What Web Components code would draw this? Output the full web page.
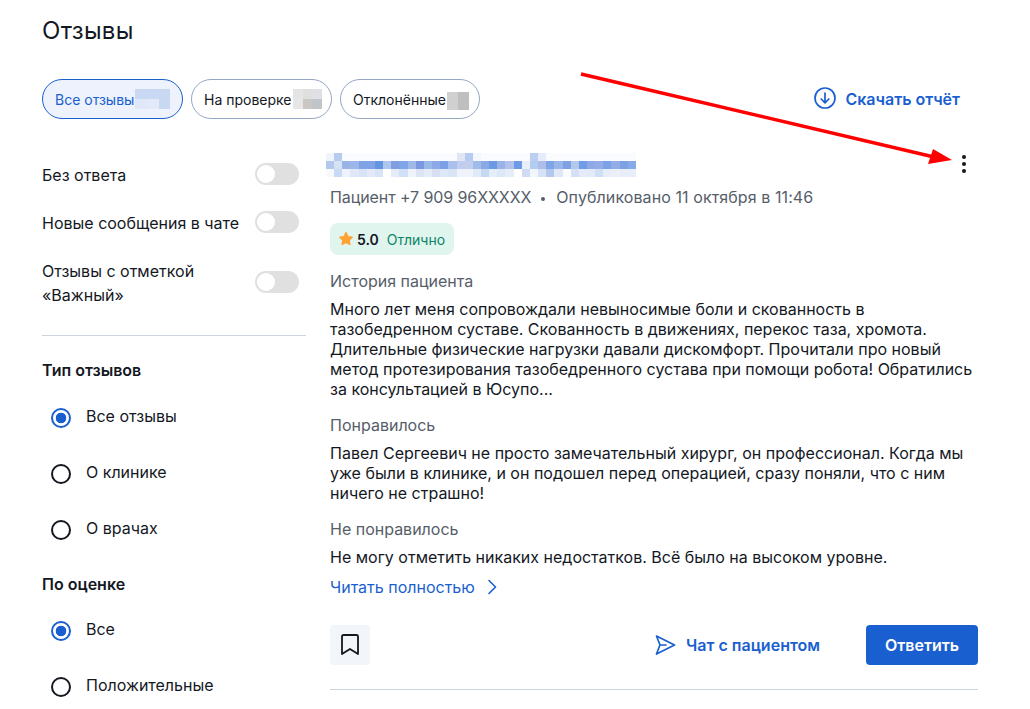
<!DOCTYPE html>
<html lang="ru">
<head>
<meta charset="utf-8">
<title>Отзывы</title>
<style>
  html, body { margin: 0; height: 709px; overflow: hidden; background: #fff; }
  body { font-family: Inter, "Noto Sans", sans-serif; font-size: 16px; color: #14181f; }
</style>
</head>
<body>
<review-page></review-page>
<script>
;(function() {
  // пикселизованные куски: каждая строка - список цветов
  class PixelBlur extends HTMLElement {
    set cells(rows) {
      const root = this.shadowRoot || this.attachShadow({ mode: 'open' })
      const w = this.getAttribute('cell-w') || 8
      const h = this.getAttribute('cell-h') || 8
      root.innerHTML = `
        <style>
          :host { display: block; line-height: 0; }
          .row { display: flex; }
          i { display: block; flex: none; width: ${w}px; height: ${h}px; }
        </style>
        ${rows.map(r => `<div class="row">${r.map(c => `<i style="background:#${c}"></i>`).join('')}</div>`).join('')}
      `
    }
  }
  customElements.define('pixel-blur', PixelBlur)

  class FilterChip extends HTMLElement {
    constructor() {
      super()
      this.attachShadow({ mode: 'open' }).innerHTML = `
        <style>
          :host {
            display: flex;
            align-items: center;
            box-sizing: border-box;
            height: 40px;
            padding-left: 12px;
            border: 1px solid #94a7c4;
            border-radius: 20px;
            font-size: 14px;
            color: #14181f;
          }
          :host([active]) {
            border-color: #1a5fd0;
            background: #edf2fc;
            color: #1a5fd0;
          }
        </style>
        <slot></slot><slot name="count"></slot>
      `
    }
  }
  customElements.define('filter-chip', FilterChip)

  class ToggleRow extends HTMLElement {
    constructor() {
      super()
      this.attachShadow({ mode: 'open' }).innerHTML = `
        <style>
          :host {
            display: flex;
            align-items: center;
            justify-content: space-between;
            width: 257px;
            font-size: 16px;
            line-height: 24px;
          }
          .label { width: 200px; white-space: nowrap; }
          .track {
            flex: none;
            box-sizing: border-box;
            width: 44px;
            height: 22px;
            padding: 2px;
            margin-bottom: 2px;
            border-radius: 11px;
            background: #e0e0e0;
          }
          .knob { width: 18px; height: 18px; border-radius: 50%; background: #fff; }
        </style>
        <div class="label"><slot></slot></div>
        <div class="track"><div class="knob"></div></div>
      `
    }
  }
  customElements.define('toggle-row', ToggleRow)

  class RadioRow extends HTMLElement {
    constructor() {
      super()
      this.attachShadow({ mode: 'open' }).innerHTML = `
        <style>
          :host {
            display: flex;
            align-items: center;
            height: 56px;
            padding-left: 9px;
            font-size: 16px;
          }
          .dot {
            flex: none;
            box-sizing: border-box;
            width: 20px;
            height: 20px;
            margin-right: 15px;
            border: 2px solid #14181f;
            border-radius: 50%;
          }
          :host([checked]) .dot {
            border-color: #1a5fd0;
            background: radial-gradient(circle, #1a5fd0 0 5px, #fff 5.6px);
          }
          span { line-height: 24px; margin-bottom: 4px; }
        </style>
        <div class="dot"></div>
        <span><slot></slot></span>
      `
    }
  }
  customElements.define('radio-row', RadioRow)

  class ReviewBlock extends HTMLElement {
    constructor() {
      super()
      this.attachShadow({ mode: 'open' }).innerHTML = `
        <style>
          :host { display: block; margin-bottom: 16px; font-size: 16px; line-height: 20px; }
          .title { color: #565e69; margin-bottom: 8px; }
          .text { color: #14181f; white-space: pre-line; }
        </style>
        <div class="title"><slot name="title"></slot></div>
        <div class="text"><slot></slot></div>
      `
    }
  }
  customElements.define('review-block', ReviewBlock)

  class ReviewCard extends HTMLElement {
    constructor() {
      super()
      this.attachShadow({ mode: 'open' }).innerHTML = `
        <style>
          :host { display: block; position: relative; width: 648px; }
          .name { margin: 1px 0 0 -4px; }
          .dots { position: absolute; left: 622px; top: 2px; width: 24px; height: 24px; }
          .meta {
            display: flex;
            align-items: center;
            margin-top: 10px;
            height: 20px;
            font-size: 16px;
            color: #565e69;
          }
          .phone { letter-spacing: -.09px; }
          .date { letter-spacing: .09px; }
          .sep { width: 4px; height: 4px; margin: 3px 11px 0 10px; border-radius: 50%; background: #565e69; }
          .badge {
            display: inline-flex;
            align-items: center;
            box-sizing: border-box;
            height: 32px;
            margin: 16px 0 16px;
            padding: 0 9px 0 8px;
            border-radius: 8px;
            background: #e0f5ee;
            font-size: 14px;
          }
          .badge svg { margin-right: 3px; }
          .badge b { font-weight: 600; margin-right: 8px; color: #14181f; }
          .badge span { color: #0b8468; }
          .more {
            display: flex;
            align-items: center;
            height: 20px;
            margin-top: -6px;
            font-size: 16px;
            color: #1a5fd0;
          }
          .more svg { margin-left: 8px; }
          .actions {
            display: flex;
            align-items: center;
            height: 40px;
            margin-top: 28px;
          }
          .mark {
            display: flex;
            align-items: center;
            justify-content: center;
            width: 40px;
            height: 40px;
            border-radius: 4px;
            background: #f2f5fa;
          }
          .chat {
            display: flex;
            align-items: center;
            margin-left: auto;
            margin-right: 46px;
            font-size: 16px;
            font-weight: 600;
            color: #1a5fd0;
          }
          .chat svg { margin-right: 9px; }
          .reply {
            display: flex;
            align-items: center;
            justify-content: center;
            width: 112px;
            height: 40px;
            border-radius: 4px;
            background: #1a5fd0;
            color: #fff;
            font-size: 16px;
            font-weight: 600;
          }
          hr { border: 0; height: 1px; margin: 24px 0 0; background: #cdd4db; }
        </style>
        <pixel-blur class="name" cell-w="8.16"></pixel-blur>
        <svg class="dots" viewBox="0 0 24 24" fill="#14181f">
          <circle cx="12" cy="3" r="2"/><circle cx="12" cy="10" r="2"/><circle cx="12" cy="17" r="2"/>
        </svg>
        <div class="meta"><span class="phone">Пациент +7 909 96XXXXX</span><span class="sep"></span><span class="date">Опубликовано 11 октября в 11:46</span></div>
        <div class="badge">
          <svg width="16" height="16" viewBox="0 0 16 16"><path fill="#ffa233" stroke="#ffa233" stroke-width="1.4" stroke-linejoin="round" d="M8 1.6l1.9 4 4.3.6-3.1 3 .8 4.3L8 11.4l-3.9 2.1.8-4.3-3.1-3 4.3-.6z"/></svg>
          <b>5.0</b><span>Отлично</span>
        </div>
        <slot></slot>
        <div class="more">Читать полностью
          <svg width="18" height="18" viewBox="0 0 18 18" fill="none" stroke="#1a5fd0" stroke-width="1.6" stroke-linecap="round" stroke-linejoin="round"><path d="M6 2.5L12.5 9 6 15.5"/></svg>
        </div>
        <div class="actions">
          <div class="mark">
            <svg width="24" height="24" viewBox="0 0 24 24" fill="none" stroke="#14181f" stroke-width="1.8" stroke-linejoin="round"><path d="M4 3.5A1.5 1.5 0 0 1 5.5 2h13A1.5 1.5 0 0 1 20 3.5V21l-8-5-8 5z"/></svg>
          </div>
          <div class="chat">
            <svg width="23" height="23" viewBox="0 0 23 23" fill="none" stroke="#1a5fd0" stroke-width="1.7" stroke-linejoin="round" stroke-linecap="round"><path d="M2.5 2L20.5 11 2.5 20 6 11zM6 11h6"/></svg>
            Чат с пациентом
          </div>
          <div class="reply">Ответить</div>
        </div>
        <hr>
      `
      this.shadowRoot.querySelector('.name').cells = [
        'f0f4fc b6cdf0 fafbff fafbff fafbff fafbff fafbff fafbff fafbff fafbff fafbff fafbff fafbff fafbff fafbff fafbff e0e6f6 b6cbf0 f4f7fd fafbfe fafbfe fafbfe fafbfe fafbfe fafbfe bdcdf0 e6edfa fafbfe fafbfe fafbfe fafbfe fafbfe fafbfe fafbfe fafbfe fafbfe fafbfe fafbfe'.split(' '),
        'b3c8ec d5e2f6 9ab3e6 9fb7e8 7fa3e4 7fa3e4 6495e0 aec5ec 7f9fe0 7fa6e6 a0b8e8 7a98e0 98b8ea 8ea8e6 7aa0e6 aac0ec c0cdf0 c5cdec 9fbceb 8ba9e3 6c9ae2 9ab2e8 b2c2ec 6c9ae4 e8eff9 b3cdf0 adbce9 7fa5e6 9ab6e8 7fa0e4 b3c9ec 6f9de6 8ea9e6 94abe6 7aa2e8 93ace6 7f9fe4 86aae8'.split(' '),
        'f8f9fd c8daf5 eff1fb dfe7f8 d8e3f6 e3e9f8 d8e4f7 ffffff e6ebf9 d0e0f6 eef3fb dbe3f5 e4ecf9 d6dff4 dde8f8 d9e5f7 f0f3fb f1f3fb e0e9f8 c5d8f3 e5edf9 dde7f7 e5edf9 ffffff d0dcf4 f2f6fc d6e3f6 b3c8ec e0e8f8 fafcfe d5dff5 e6ebf9 e4ebf8 cfdff5 e8eef9 eaeffa e8eef9 e8eef9'.split(' ')
      ]
    }
  }
  customElements.define('review-card', ReviewCard)

  class ReviewPage extends HTMLElement {
    constructor() {
      super()
      this.attachShadow({ mode: 'open' }).innerHTML = `
        <style>
          :host { display: block; position: relative; width: 1030px; height: 709px; overflow: hidden; padding: 0 0 0 42px; box-sizing: border-box; }
          h1 { margin: 0; padding-top: 17px; height: 79px; box-sizing: border-box; font-size: 24px; line-height: 28px; font-weight: 400; letter-spacing: .3px; }
          .tabs { display: flex; align-items: center; width: 936px; gap: 8px; }
          .download {
            display: flex;
            align-items: center;
            margin-left: auto;
            margin-right: 18px;
            font-size: 16px;
            font-weight: 600;
            color: #1a5fd0;
          }
          .download svg { margin: -2px 9px 0 0; }
          .cols { display: flex; gap: 24px; margin-top: 33px; }
          aside { flex: none; width: 264px; padding-top: 11px; }
          .toggles { display: flex; flex-direction: column; gap: 24px; }
          aside hr { border: 0; height: 1px; margin: 28px 0 24px; background: #cdd4db; }
          h2 { margin: 0; font-size: 16px; line-height: 20px; font-weight: 600; }
          .group { margin: 10px 0 16px; }
          .group.second { margin-top: 9px; }
          .arrow { position: absolute; left: 0; top: 0; pointer-events: none; }
          #c1 { margin-left: 1px; }
          #c2 { margin-left: 2px; }
          #c3 { margin: 4px 0 0 1px; }
        </style>
        <h1>Отзывы</h1>
        <div class="tabs">
          <filter-chip active style="width:141px">Все отзывы<pixel-blur id="c1" slot="count" cell-w="11.7" cell-h="10"></pixel-blur></filter-chip>
          <filter-chip style="width:141px">На проверке<pixel-blur id="c2" slot="count" cell-w="9.4" cell-h="10"></pixel-blur></filter-chip>
          <filter-chip style="width:140px">Отклонённые<pixel-blur id="c3" slot="count" cell-w="11" cell-h="18"></pixel-blur></filter-chip>
          <div class="download">
            <svg width="22" height="22" viewBox="0 0 22 22" fill="none" stroke="#1a5fd0" stroke-width="1.7" stroke-linecap="round" stroke-linejoin="round"><circle cx="11" cy="11" r="10"/><path d="M11 6v9.5M7.2 12l3.8 3.8 3.8-3.8"/></svg>
            Скачать отчёт
          </div>
        </div>
        <div class="cols">
          <aside>
            <div class="toggles">
              <toggle-row>Без ответа</toggle-row>
              <toggle-row>Новые сообщения в чате</toggle-row>
              <toggle-row>Отзывы с отметкой<br>«Важный»</toggle-row>
            </div>
            <hr>
            <h2>Тип отзывов</h2>
            <div class="group">
              <radio-row checked>Все отзывы</radio-row>
              <radio-row>О клинике</radio-row>
              <radio-row>О врачах</radio-row>
            </div>
            <h2>По оценке</h2>
            <div class="group second">
              <radio-row checked>Все</radio-row>
              <radio-row>Положительные</radio-row>
            </div>
          </aside>
          <review-card>
            <review-block><span slot="title">История пациента</span>Много лет меня сопровождали невыносимые боли и скованность в
тазобедренном суставе. Скованность в движениях, перекос таза, хромота.
Длительные физические нагрузки давали дискомфорт. Прочитали про новый
метод протезирования тазобедренного сустава при помощи робота! Обратились
за консультацией в Юсупо...</review-block>
            <review-block><span slot="title">Понравилось</span>Павел Сергеевич не просто замечательный хирург, он профессионал. Когда мы
уже были в клинике, и он подошел перед операцией, сразу поняли, что с ним
ничего не страшно!</review-block>
            <review-block><span slot="title">Не понравилось</span>Не могу отметить никаких недостатков. Всё было на высоком уровне.</review-block>
          </review-card>
        </div>
        <svg class="arrow" width="1030" height="709" viewBox="0 0 1030 709">
          <path d="M581 74L934 157" stroke="#f00" stroke-width="3.4" fill="none"/>
          <path d="M952 160L933 149L928 164z" fill="#f00"/>
        </svg>
      `
      const root = this.shadowRoot
      root.getElementById('c1').cells = [
        ['c9d8f3', 'c9d8f3', 'c8d8f3'],
        ['dfe7f8', 'e2e9f9', 'c8d8f3']
      ]
      root.getElementById('c2').cells = [
        ['e4e4e4', 'e0dfdf', 'dfe0e4'],
        ['e6e6e6', 'cac6c4', 'bfc5c9']
      ]
      root.getElementById('c3').cells = [['d0d0d0', 'bfbfbf']]
    }
  }
  customElements.define('review-page', ReviewPage)
})()
</script>
</body>
</html>
